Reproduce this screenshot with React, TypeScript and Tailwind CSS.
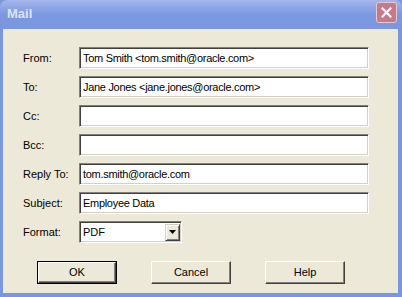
const fields = [
  { label: "From:", value: "Tom Smith <tom.smith@oracle.com>" },
  { label: "To:", value: "Jane Jones <jane.jones@oracle.com>" },
  { label: "Cc:", value: "" },
  { label: "Bcc:", value: "" },
  { label: "Reply To:", value: "tom.smith@oracle.com" },
  { label: "Subject:", value: "Employee Data" },
]

// classic sunken 3D edge
const sunken =
  "border-t border-l border-t-[#808080] border-l-[#808080] border-b border-r border-b-white border-r-white shadow-[inset_1px_1px_0_#404040,inset_-1px_-1px_0_#d4d0c8]"

function Button({ label, primary }: { label: string; primary?: boolean }) {
  return (
    <div
      className={
        "w-[80px] h-[23px] " + (primary ? "border border-black" : "")
      }
    >
      <div
        className={
          "w-full h-full flex items-center justify-center bg-[#ece9d8] text-black border-t border-l border-t-white border-l-white border-b border-r border-b-[#404040] border-r-[#404040] shadow-[inset_-1px_-1px_0_#808080]"
        }
      >
        {label}
      </div>
    </div>
  )
}

export default function App() {
  return (
    <div
      className="w-[402px] h-[297px] flex flex-col bg-[#7b96df] text-[11px] text-black"
      style={{ fontFamily: '"Liberation Sans", Arial, sans-serif' }}
    >
      {/* Title bar */}
      <div className="h-[29px] shrink-0 flex items-center justify-between pl-[7px] pr-[5px] rounded-t-[7px] bg-gradient-to-b from-[#a3b6ec] via-[#7d98e0] to-[#7a96df]">
        <span className="font-bold text-[13px] text-[#dbe4f9] -mt-[1px]">Mail</span>
        <div className="w-[21px] h-[21px] -mt-[4px] rounded-[3px] border border-[#e6c8d0] bg-[#c47a89] flex items-center justify-center">
          <svg width="11" height="11" viewBox="0 0 11 11">
            <path d="M1.5 1.5 L9.5 9.5 M9.5 1.5 L1.5 9.5" stroke="white" strokeWidth="2.2" strokeLinecap="square" />
          </svg>
        </div>
      </div>

      {/* Body */}
      <div className="flex-1 ml-[3px] mr-[4px] mb-[4px] bg-[#ece9d8] pt-[18px] pl-[20px] flex flex-col">
        <div className="flex flex-col gap-[7px]">
          {fields.map((f) => (
            <div key={f.label} className="flex items-center h-[22px]">
              <div className="w-[56px]">{f.label}</div>
              <div className={"w-[290px] h-[22px] bg-white flex items-center pl-[3px] tracking-[-0.3px] " + sunken}>
                {f.value}
              </div>
            </div>
          ))}
          <div className="flex items-center h-[22px]">
            <div className="w-[56px]">Format:</div>
            <div className={"w-[103px] h-[22px] bg-white flex items-center justify-between pl-[3px] pr-[1px] " + sunken}>
              <span>PDF</span>
              <div className="w-[15px] h-[17px] bg-[#ece9d8] flex items-center justify-center border-t border-l border-t-[#d4d0c8] border-l-[#d4d0c8] border-b border-r border-b-[#404040] border-r-[#404040] shadow-[inset_1px_1px_0_white,inset_-1px_-1px_0_#808080]">
                <svg width="7" height="4" viewBox="0 0 7 4">
                  <path d="M0 0 H7 L3.5 4 Z" fill="black" />
                </svg>
              </div>
            </div>
          </div>
        </div>

        <div className="flex gap-[34px] mt-[18px] ml-[14px]">
          <Button label="OK" primary />
          <Button label="Cancel" />
          <Button label="Help" />
        </div>
      </div>
    </div>
  )
}
